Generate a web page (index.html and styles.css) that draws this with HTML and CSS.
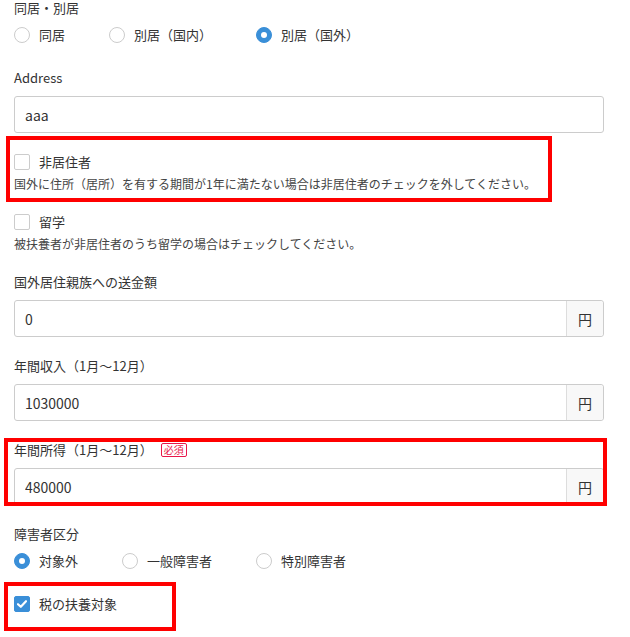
FILE: index.html
```html
<!DOCTYPE html>
<html lang="ja">
<head>
    <meta charset="UTF-8">
    <meta name="viewport" content="width=device-width, initial-scale=1.0">
    <title>扶養親族</title>
    <link rel="stylesheet" href="styles.css">
</head>
<body>
    <form class="form">
        <div class="group group-choice group-top">
            <div class="label">同居・別居</div>
            <div class="options">
                <label class="option"><span class="radio"></span>同居</label>
                <label class="option"><span class="radio"></span>別居（国内）</label>
                <label class="option"><span class="radio checked"></span>別居（国外）</label>
            </div>
        </div>

        <div class="group">
            <div class="label">Address</div>
            <input class="text-input" type="text" value="aaa">
        </div>

        <div class="group mark mark-nonres">
            <label class="check-row"><span class="checkbox"></span>非居住者</label>
            <p class="help">国外に住所（居所）を有する期間が1年に満たない場合は非居住者のチェックを外してください。</p>
        </div>

        <div class="group">
            <label class="check-row"><span class="checkbox"></span>留学</label>
            <p class="help">被扶養者が非居住者のうち留学の場合はチェックしてください。</p>
        </div>

        <div class="group">
            <div class="label">国外居住親族への送金額</div>
            <div class="input-group">
                <input type="text" value="0">
                <span class="addon">円</span>
            </div>
        </div>

        <div class="group">
            <div class="label">年間収入（1月～12月）</div>
            <div class="input-group">
                <input type="text" value="1030000">
                <span class="addon">円</span>
            </div>
        </div>

        <div class="group mark mark-income">
            <div class="label">年間所得（1月～12月）<span class="badge">必須</span></div>
            <div class="input-group">
                <input type="text" value="480000">
                <span class="addon">円</span>
            </div>
        </div>

        <div class="group group-choice">
            <div class="label">障害者区分</div>
            <div class="options">
                <label class="option"><span class="radio checked"></span>対象外</label>
                <label class="option"><span class="radio"></span>一般障害者</label>
                <label class="option"><span class="radio"></span>特別障害者</label>
            </div>
        </div>

        <div class="group mark mark-dep">
            <label class="check-row">
                <span class="checkbox checked">
                    <svg width="10" height="8" viewBox="0 0 10 8"><path d="M1 4.2 L3.8 6.8 L9 1.2" fill="none" stroke="#fff" stroke-width="2.2" stroke-linecap="round" stroke-linejoin="round"/></svg>
                </span>税の扶養対象
            </label>
        </div>
    </form>
</body>
</html>
```

FILE: styles.css
```css
body {
    margin: 0;
    font-family: "Noto Sans CJK JP", "Noto Sans", sans-serif;
    color: #333;
    background: #fff;
}

.form {
    width: 590px;
    margin: 0 0 0 14px;
}

.group {
    position: relative;
    margin-bottom: 19px;
}

.group-choice {
    margin-bottom: 24px;
}

.label {
    display: flex;
    align-items: center;
    font-size: 13px;
    line-height: 20px;
    margin-bottom: 8px;
}

/* first label sits right at the top edge */
.group-top .label {
    line-height: 16px;
    margin-bottom: 10px;
}

.badge {
    margin-left: 8px;
    padding: 0 2px;
    font-size: 10px;
    line-height: 12px;
    color: #e8174a;
    border: 1px solid #e8174a;
    border-radius: 2px;
}

/* radios */
.options {
    display: flex;
    gap: 44px;
}

.option {
    display: flex;
    align-items: center;
    gap: 9px;
    font-size: 13px;
    line-height: 18px;
}

.radio {
    width: 16px;
    height: 16px;
    box-sizing: border-box;
    border: 1px solid #ccc;
    border-radius: 50%;
    background: #fff;
}

.radio.checked {
    display: flex;
    align-items: center;
    justify-content: center;
    background: #3a8fd8;
    border-color: #3a8fd8;
}

.radio.checked::after {
    content: '';
    width: 6px;
    height: 6px;
    border-radius: 50%;
    background: #fff;
}

/* checkboxes */
.check-row {
    display: flex;
    align-items: center;
    gap: 9px;
    font-size: 13px;
    line-height: 20px;
}

.checkbox {
    display: flex;
    align-items: center;
    justify-content: center;
    width: 16px;
    height: 16px;
    box-sizing: border-box;
    border: 1px solid #ccc;
    border-radius: 2px;
    background: #fff;
}

.checkbox.checked {
    background: #3a8fd8;
    border-color: #3a8fd8;
}

.help {
    margin: 3px 0 0;
    font-size: 12px;
    line-height: 18px;
    color: #444;
}

/* inputs */
.text-input,
.input-group {
    display: flex;
    width: 100%;
    height: 37px;
    box-sizing: border-box;
    border: 1px solid #ccc;
    border-radius: 3px;
    background: #fff;
}

.text-input {
    padding: 0 10px;
    font-family: inherit;
    font-size: 14px;
    color: #333;
}

.input-group input {
    flex: 1;
    min-width: 0;
    border: none;
    padding: 0 10px;
    font-family: inherit;
    font-size: 14px;
    color: #333;
    background: transparent;
}

.addon {
    display: flex;
    align-items: center;
    justify-content: center;
    width: 36px;
    border-left: 1px solid #ddd;
    background: #f8f8f8;
    font-size: 14px;
    border-radius: 0 3px 3px 0;
}

/* red highlight frames */
.mark::after {
    content: '';
    position: absolute;
    border: 4px solid #f00;
    pointer-events: none;
}

.mark-nonres::after {
    top: -16px;
    bottom: -9px;
    left: -8px;
    right: 52px;
}

.mark-income::after {
    top: -2px;
    bottom: -1px;
    left: -10px;
    right: -3px;
}

.mark-dep::after {
    top: -12px;
    left: -10px;
    width: 172px;
    height: 49px;
    box-sizing: border-box;
}
```
